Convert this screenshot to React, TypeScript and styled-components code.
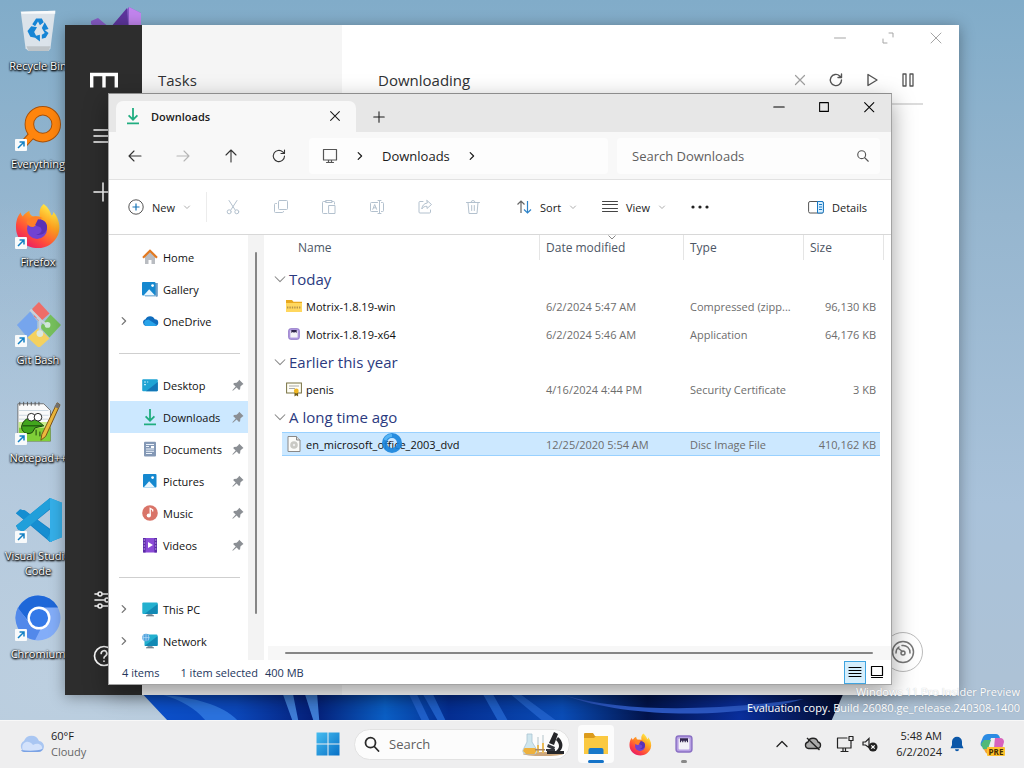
import React from 'react';
import styled, { createGlobalStyle, css } from 'styled-components';

const GlobalStyle = createGlobalStyle`
  *, *::before, *::after { box-sizing: border-box; }
  body { margin: 0; font-family: "Open Sans", "Noto Sans", sans-serif; font-size: 11px; color: #1b1b1b; }
  button, input { font: inherit; color: inherit; border: 0; background: none; padding: 0; margin: 0; }
  svg { display: block; flex: none; }
`;

/* ---------- desktop ---------- */

const Screen = styled.div`
  display: flex;
  flex-direction: column;
  height: 100vh;
  overflow: hidden;
`;

const Desktop = styled.main`
  flex: 1;
  min-height: 0;
  position: relative;
  overflow: hidden;
  background:
    radial-gradient(ellipse at 5% 95%, #bccfe0 0, rgba(188, 207, 224, 0) 50%),
    linear-gradient(180deg, #81acc9 0%, #96b6cf 30%, #a9c2da 70%, #aec2d5 100%);
`;

const Bloom = styled.svg`
  position: absolute;
  left: 13%;
  bottom: 0;
  width: 70%;
  height: 32px;
`;

const IconGrid = styled.div`
  display: flex;
  gap: 2px;
  padding-top: 7px;
`;

const IconColumn = styled.div`
  display: flex;
  flex-direction: column;
  width: 76px;
`;

const Shortcut = styled.a`
  position: relative;
  display: flex;
  flex-direction: column;
  align-items: center;
  gap: 5px;
  height: 98px;
  color: #fff;
  text-decoration: none;
  text-align: center;
  line-height: 15px;
  text-shadow: 0 1px 2px #000, 1px 1px 2px #000, 0 0 2px #000;
`;

const ShortcutArrow = styled.svg`
  position: absolute;
  left: 15px;
  top: 34px;
`;

const Watermark = styled.div`
  position: absolute;
  right: 4px;
  bottom: 4px;
  text-align: right;
  line-height: 16px;
  color: #fff;
  text-shadow: 0 0 1px rgba(60, 70, 90, 0.4);
`;

/* ---------- Motrix window ---------- */

const MotrixWindow = styled.section`
  position: absolute;
  inset: 25px 65px 25px 65px;
  display: flex;
  background: #fff;
  box-shadow: 0 2px 14px rgba(0, 0, 0, 0.35);
`;

const MotrixRail = styled.nav`
  display: flex;
  flex-direction: column;
  align-items: center;
  gap: 32px;
  width: 77px;
  padding: 43px 0 26px;
  background: #2d2d2d;
  color: #fff;
`;

const RailButton = styled.button<{ $pushed?: boolean }>`
  display: flex;
  height: 24px;
  margin-top: ${(p) => (p.$pushed ? 'auto' : '0')};
`;

const MotrixTasks = styled.aside`
  width: 200px;
  padding: 43px 16px;
  background: #f5f5f5;
`;

const MotrixTitle = styled.h2`
  margin: 0;
  font-size: 15px;
  line-height: 24px;
  font-weight: 400;
  color: #303133;
`;

const MotrixMain = styled.div`
  flex: 1;
  display: flex;
  flex-direction: column;
  padding: 0 36px;
`;

const MotrixCaption = styled.div`
  display: flex;
  justify-content: flex-end;
  gap: 32px;
  height: 26px;
  padding-top: 5px;
  margin-right: -21px;
  color: #a5a5a5;
`;

const MotrixHeader = styled.div`
  display: flex;
  align-items: center;
  height: 54px;
  padding-top: 6px;
  border-bottom: 2px solid #dcdcdc;
`;

const MotrixActions = styled.div`
  display: flex;
  gap: 20px;
  margin-left: auto;
  margin-right: 7px;
  color: #555;
`;

const PlainButton = styled.button<{ $muted?: boolean }>`
  display: flex;
  color: ${(p) => (p.$muted ? '#a0a0a0' : 'inherit')};
`;

const SpeedBadge = styled.button`
  display: flex;
  align-items: center;
  justify-content: center;
  width: 40px;
  height: 40px;
  margin: auto 0 23px auto;
  border: 1px solid #bbb;
  border-radius: 50%;
  color: #777;
`;

/* ---------- Explorer window ---------- */

const ExplorerWindow = styled.section`
  position: absolute;
  inset: 93px 132px 35px 108px;
  display: flex;
  flex-direction: column;
  border: 1px solid #a3a3a3;
  border-top-color: #8d8d8d;
  background: #fff;
  box-shadow: 0 8px 22px rgba(0, 0, 0, 0.38);
`;

const TabStrip = styled.header`
  display: flex;
  align-items: flex-end;
  height: 38px;
  flex: none;
  padding-left: 7px;
  background: #e7e7e7;
`;

const Tab = styled.div`
  display: flex;
  align-items: center;
  width: 240px;
  height: 31px;
  padding: 0 14px 1px 9px;
  gap: 10px;
  border-radius: 7px 7px 0 0;
  background: #f8f8f8;
  font-weight: 600;
`;

const TabClose = styled.button`
  display: flex;
  margin-left: auto;
`;

const NewTab = styled.button`
  display: flex;
  padding: 8px 16px;
`;

const CaptionButtons = styled.div`
  display: flex;
  align-self: flex-start;
  margin-left: auto;
`;

const CaptionButton = styled.button`
  display: flex;
  align-items: center;
  justify-content: center;
  width: 45px;
  height: 26px;
`;

const NavBar = styled.div`
  display: flex;
  align-items: center;
  height: 48px;
  flex: none;
  padding: 0 11px 0 2px;
  background: #f8f8f8;
  border-bottom: 1px solid #e2e2e2;
`;

const IconButton = styled.button<{ $dim?: boolean; $narrow?: boolean }>`
  display: flex;
  align-items: center;
  justify-content: center;
  width: ${(p) => (p.$narrow ? '40px' : '48px')};
  height: 32px;
  flex: none;
  color: ${(p) => (p.$dim ? '#b5b5b5' : '#333')};
`;

const AddressBar = styled.div`
  display: flex;
  align-items: center;
  flex: 1;
  gap: 14px;
  height: 36px;
  margin: 0 9px 0 6px;
  padding: 0 13px;
  border-radius: 4px;
  background: #fdfdfd;
  font-size: 13px;
`;

const SearchBox = styled.label`
  display: flex;
  align-items: center;
  width: 263px;
  height: 36px;
  padding: 0 10px 0 15px;
  border-radius: 4px;
  background: #fdfdfd;
`;

const SearchInput = styled.input`
  flex: 1;
  min-width: 0;
  font-size: 13px;
  outline: none;
  &::placeholder { color: #5f5f5f; opacity: 1; }
`;

const Toolbar = styled.div`
  display: flex;
  align-items: center;
  height: 55px;
  flex: none;
  padding: 0 16px 0 11px;
  border-bottom: 1px solid #d8d8d8;
`;

const CommandButton = styled.button<{ $end?: boolean }>`
  display: flex;
  align-items: center;
  gap: 8px;
  width: ${(p) => (p.$end ? 'auto' : '86px')};
  height: 32px;
  padding: 0 8px;
  margin-left: ${(p) => (p.$end ? 'auto' : '0')};
`;

const ToolDivider = styled.span`
  width: 1px;
  height: 30px;
  margin: 0 2px 0 0;
  background: #ececec;
`;

const IconTools = styled.div`
  display: flex;
  margin-right: 11px;
`;

const Body = styled.div`
  display: flex;
  flex: 1;
  min-height: 0;
`;

const Sidebar = styled.nav`
  width: 139px;
  flex: none;
  padding-top: 6px;
  padding-left: 1px;
  overflow: hidden;
`;

const SideItem = styled.a<{ $active?: boolean }>`
  display: grid;
  grid-template-columns: 21px 16px 1fr 16px;
  column-gap: 5px;
  align-items: center;
  height: 32px;
  padding-left: 6px;
  color: #111;
  text-decoration: none;
  white-space: nowrap;
  background: ${(p) => (p.$active ? '#cce8ff' : 'transparent')};
`;

const SideRule = styled.hr`
  height: 1px;
  margin: 16px 8px 15px 9px;
  border: 0;
  background: #cfcfcf;
`;

const ScrollTrack = styled.div`
  display: flex;
  justify-content: center;
  width: 16px;
  flex: none;
  padding: 17px 0 46px;
  background: #f3f3f3;
`;

const ScrollThumb = styled.span<{ $flat?: boolean }>`
  ${(p) => (p.$flat
    ? css`flex: 1; height: 2px;`
    : css`width: 2px;`)}
  border-radius: 1px;
  background: #868686;
`;

const ListPane = styled.div`
  display: flex;
  flex-direction: column;
  flex: 1;
  min-width: 0;
  padding-left: 4px;
`;

const FlatTrack = styled.div`
  display: flex;
  align-items: center;
  height: 14px;
  margin-top: auto;
  padding: 0 18px 1px 17px;
  background: #f7f7f7;
`;

const FileTable = styled.table`
  width: calc(100% - 7px);
  table-layout: fixed;
  border-collapse: separate;
  border-spacing: 0;
  color: #6d6d6d;
`;

const HeadCell = styled.th<{ $line?: boolean }>`
  position: relative;
  height: 25px;
  padding: 0 0 0 ${(p) => (p.$line ? '6px' : '16px')};
  border-left: ${(p) => (p.$line ? '1px solid #e5e5e5' : '0')};
  text-align: left;
  font-size: 12px;
  font-weight: 400;
  color: #4c5665;
`;

const HeadEnd = styled.td`
  border-right: 1px solid #e5e5e5;
`;

const SortMark = styled.svg`
  position: absolute;
  left: 67px;
  top: 0;
`;

const Spacer = styled.td`
  height: 5px;
  padding: 0;
`;

const GroupCell = styled.th`
  height: 27px;
  padding: 0 0 0 6px;
  text-align: left;
  font-size: 15px;
  line-height: 20px;
  font-weight: 400;
  color: #2b3a80;
`;

const Inline = styled.span<{ $gap: number }>`
  display: flex;
  align-items: center;
  gap: ${(p) => p.$gap}px;
`;

const Cell = styled.td<{ $align?: 'right' }>`
  height: 28px;
  padding: 0 4px 0 7px;
  border: 0 solid transparent;
  border-width: 2px 0;
  background-clip: padding-box;
  text-align: ${(p) => p.$align ?? 'left'};
  white-space: nowrap;
  overflow: hidden;
  text-overflow: ellipsis;
`;

const NameCell = styled(Cell)`
  padding: 0 4px;
  color: #111;
`;

const FileRow = styled.tr<{ $selected?: boolean }>`
  ${(p) => p.$selected && css`
    ${Cell} {
      background-color: #cce8ff;
      box-shadow: inset 0 1px #99d1ff, inset 0 -1px #99d1ff;
    }
  `}
`;

const StatusBar = styled.footer`
  display: flex;
  align-items: center;
  height: 24px;
  flex: none;
  padding: 0 6px 0 13px;
  color: #24365c;
`;

const StatusText = styled.span<{ $gap: number }>`
  margin-right: ${(p) => p.$gap}px;
`;

const ViewButton = styled.button<{ $on?: boolean }>`
  display: flex;
  align-items: center;
  justify-content: center;
  width: 22px;
  height: 23px;
  border: 1px solid ${(p) => (p.$on ? '#3fa4e0' : 'transparent')};
  background: ${(p) => (p.$on ? '#d5eefc' : 'transparent')};
`;

const ViewSwitch = styled.div`
  display: flex;
  margin-left: auto;
  margin-right: -3px;
`;

const BusyCursor = styled.svg`
  position: absolute;
  left: 272px;
  top: 338px;
`;

/* ---------- taskbar ---------- */

const Taskbar = styled.footer`
  display: grid;
  grid-template-columns: 1fr auto 1fr;
  align-items: center;
  height: 48px;
  flex: none;
  padding-bottom: 1px;
  background: #eeeeef;
  border-top: 1px solid #f8f8f8;
`;

const Weather = styled.button`
  display: flex;
  align-items: center;
  gap: 6px;
  padding-left: 18px;
  text-align: left;
  line-height: 16px;
`;

const Muted = styled.span`
  display: block;
  color: #666;
`;

const Dock = styled.div`
  display: flex;
  align-items: center;
  gap: 8px;
  padding-right: 12px;
`;

const DockButton = styled.button<{ $active?: boolean }>`
  position: relative;
  display: flex;
  align-items: center;
  justify-content: center;
  width: 36px;
  height: 38px;
  border-radius: 4px;
  background: ${(p) => (p.$active ? '#fcfcfc' : 'transparent')};
`;

const RunMark = styled.span<{ $active?: boolean }>`
  position: absolute;
  bottom: 0;
  width: ${(p) => (p.$active ? '16px' : '6px')};
  height: 3px;
  border-radius: 2px;
  background: ${(p) => (p.$active ? '#1473c8' : '#888')};
`;

const DockSearch = styled.label`
  display: flex;
  align-items: center;
  gap: 9px;
  width: 216px;
  height: 31px;
  padding: 0 4px 0 9px;
  border: 1px solid #e2e2e2;
  border-radius: 16px;
  background: #fcfcfc;
`;

const Tray = styled.div`
  display: flex;
  align-items: center;
  justify-content: flex-end;
  gap: 8px;
  padding-right: 18px;
  color: #222;
`;

const TrayIcons = styled.div`
  display: flex;
  align-items: center;
  gap: 14px;
`;

const Clock = styled.div`
  width: 56px;
  text-align: right;
  line-height: 16px;
  white-space: nowrap;
`;

const CopilotButton = styled(PlainButton)`
  margin-left: 8px;
`;

/* ---------- line icons ---------- */

type GlyphProps = { d: string; size?: number; w?: number; box?: number; color?: string };

const Glyph = ({ d, size = 16, w = 1, box = 16, color = 'currentColor' }: GlyphProps) => (
  <svg width={size} height={size} viewBox={`0 0 ${box} ${box}`} fill="none" stroke={color} strokeWidth={w} strokeLinecap="round" strokeLinejoin="round" aria-hidden="true">
    <path d={d} />
  </svg>
);

const CLOSE = 'M3 3l10 10M13 3L3 13';
const REFRESH = 'M13.5 8a5.6 5.6 0 1 1-1.8-4.1L13.5 5.5M13.5 2v3.5H10';
const CHEVRON_RIGHT = 'M6.2 4.6l3.4 3.4-3.4 3.400';
const CHEVRON_DOWN = 'M3 6l5 5 5-5';

const DownArrow = () => (
  <svg width="16" height="18" viewBox="0 0 16 18" fill="none" stroke="#20ad80" strokeWidth="1.8">
    <path d="M8 1v11.5M3.6 8.4L8 12.7l4.4-4.3M2 16.4h12" />
  </svg>
);

const Pin = () => (
  <svg width="12" height="12" viewBox="0 0 12 12">
    <path d="M7.2.8l4.300 4.300-1.200.6-1.900 1.900-.3 2.700-1.100.6L4.600 8.500 1.200 11.600l-.8.2.2-.8L3.700 7.600 1.300 5.200l.6-1.100 2.700-.3 1.900-1.900z" fill="#8b8f94" />
  </svg>
);

const Monitor = ({ network }: { network?: boolean }) => (
  <svg width="16" height="16" viewBox="0 0 16 16">
    <path d="M6 12h4l1 3H5z" fill="#8898a5" /><path d="M4 14.3h8v1H4z" fill="#6b7883" />
    <rect x={network ? 2.5 : 0.3} y="1.5" width={network ? 13 : 15.4} height="11.5" rx="1" fill="#23b0cf" />
    <path d="M2.5 13L15.7 3v9a1 1 0 0 1-1 1z" fill="#1289b4" />
    {network && <><circle cx="4" cy="4.6" r="3.8" fill="#4d9fdc" /><path d="M.5 4.6h7M4 1v7.2M2 1.6c-1 2-1 4 0 6M6 1.6c1 2 1 4 0 6" stroke="#c7e9fb" strokeWidth=".6" fill="none" /></>}
  </svg>
);

const PictureIcon = ({ stacked }: { stacked?: boolean }) => (
  <svg width="16" height="16" viewBox="0 0 16 16">
    {stacked && <path d="M3 2h12.5v13.5H3z" fill="#0a5b9e" />}
    {stacked && <path d="M14 1v14.2H2" stroke="#fff" fill="none" strokeWidth=".8" />}
    <rect x={stacked ? 0 : 1} y="1" width="13.5" height="13.5" rx="1" fill="#1588cf" />
    <path d="M1.6 14.5l5.6-6.2 5.8 6.2z" fill="#eaf7ff" /><circle cx="10.6" cy="4.6" r="1.4" fill="#fff" />
  </svg>
);

const MotrixApp = ({ size = 14 }: { size?: number }) => (
  <svg width={size} height={size} viewBox="0 0 20 20">
    <rect x="1.2" y="1.2" width="17.6" height="17.6" rx="3" fill="#b7a0e4" stroke="#8a70c4" strokeWidth="1.6" />
    <rect x="4" y="4" width="12" height="12" rx="1" fill="#f4f2f8" /><path d="M5.500 3.500h9v4.500h-1.300V6.500h-1.200V8h-1.300V6.500H9.300V8H8V6.500H6.800V8H5.500z" fill="#32264e" />
  </svg>
);

const FirefoxIcon = ({ size }: { size: number }) => (
  <svg width={size} height={size} viewBox="0 0 48 48">
    <defs>
      <linearGradient id="fox" x1="0.85" y1="0.05" x2="0.2" y2="1"><stop offset="0" stopColor="#fff44f" /><stop offset=".35" stopColor="#ffa21f" /><stop offset=".7" stopColor="#ff4a3c" /><stop offset="1" stopColor="#e5146c" /></linearGradient>
    </defs>
    <path d="M30 1c5 4 7 8 8 12 2-1 2-3 2-4 6 7 8 16 5 24-4 9-12 14-21 14C11 47 1 38 1 25c0-6 2-12 5-15 0 2 1 3 2 4 2-3 5-5 7-6 0 3 1 5 4 6h7c-1-5 0-10 4-13z" fill="url(#fox)" />
    <circle cx="23" cy="27" r="10.5" fill="#7142d2" /><path d="M14 17c4-4 10-4 15-1-3 0-4 2-2 4l-8 5c-4 0-6-2-7-5z" fill="#ff7f28" /><path d="M24 17c7 0 11 5 9 11-2 5-7 6-11 5 5-1 7-4 5-7-1-2-4-1-6-3z" fill="#5b31b5" />
  </svg>
);

/* ---------- desktop shortcut art ---------- */

const recycleArt = (
  <svg width="46" height="46" viewBox="0 0 48 48">
    <path d="M6 5l36-1-5 39-2 3H14l-3-3z" fill="#e4e9ed" opacity=".9" /><path d="M6 5l36-1v3H7z" fill="#f9fbfc" /><path d="M12 41h25l-2 5H14z" fill="#bec4c8" />
    <g fill="#1685d5"><path d="M18 18l4-6h6l2 4-4 3-2-4-3 5z" /><path d="M31 16l4 7-4 1 4 3-3 5-4 1v-4l3-2-3-5z" /><path d="M26 29v7l-5-4-5-1-3-6 4-5 6 1-3 5 2 4z" /></g>
  </svg>
);
const everythingArt = (
  <svg width="46" height="46" viewBox="0 0 48 48">
    <path d="M18 31L7 43" stroke="#a75008" strokeWidth="8" strokeLinecap="round" /><circle cx="29" cy="20" r="14" fill="none" stroke="#a75008" strokeWidth="10" />
    <path d="M18 31L7 43" stroke="#ff850d" strokeWidth="6" strokeLinecap="round" /><circle cx="29" cy="20" r="14" fill="none" stroke="#ff850d" strokeWidth="8" />
  </svg>
);
const gitArt = (
  <svg width="48" height="46" viewBox="0 0 48 48">
    <path d="M18 8l7-7 11 12-10 9-6-6z" fill="#ee6d68" /><path d="M16 11L2 25l11 13 10-9v-8z" fill="#76a5ed" /><path d="M37 14l11 11-12 13-10-11z" fill="#76c05c" /><path d="M25 28l11 11-11 10-12-11z" fill="#f4d160" />
    <path d="M16 9l10 10v15M23 17l10 8" stroke="#c7d2dc" strokeWidth="2.5" fill="none" /><circle cx="26" cy="34" r="3.5" fill="#dce7dd" /><circle cx="34" cy="25" r="3" fill="#d0e8d7" />
  </svg>
);
const notepadArt = (
  <svg width="46" height="46" viewBox="0 0 48 48">
    <path d="M3 5h27l7 7v32H3z" fill="#fafafa" stroke="#555" strokeWidth=".8" /><path d="M4 24h33v20H4z" fill="#80cf38" /><path d="M4 24h33v6H4z" fill="#c9ed8c" />
    <path d="M5 3v4M9 3v4M13 3v4M17 3v4M21 3v4M25 3v4" stroke="#555" /><path d="M4 12h31M4 17h31M4 21h31" stroke="#cbd6df" />
    <path d="M7 28c2-9 13-11 17-5l6 5-9 2-3 5c-6 3-12-1-11-7z" fill="#42a51d" stroke="#173f0c" /><circle cx="17" cy="19" r="4" fill="#fff" stroke="#222" /><circle cx="24" cy="19" r="4" fill="#fff" stroke="#222" /><path d="M8 28h20M22 38v-6M26 39v-5M30 39v-5" stroke="#173f0c" />
    <path d="M44 4l3 2-15 33-5 4 1-6z" fill="#edb83d" stroke="#775017" /><path d="M44 4l3 2-2 4-4-2z" fill="#777" />
  </svg>
);
const codeArt = (
  <svg width="48" height="46" viewBox="0 0 48 48" preserveAspectRatio="none">
    <path d="M36 1v46L2 17l4-4 5 1 25 19V13L9 36l-5-2-2-4z" fill="#1480c4" /><path d="M2 17l4-4 5 1 27 22v11z" fill="#168ed1" /><path d="M36 1l12 5v36l-12 5-3-3 3-6V12L9 36l-5-2-2-4z" fill="#219fda" /><path d="M36 1l12 5v36l-12 5z" fill="#35afe8" />
  </svg>
);
const chromiumArt = (
  <svg width="46" height="46" viewBox="0 0 48 48">
    <circle cx="24" cy="24" r="23.5" fill="#83adf8" /><path d="M3 14A23.5 23.5 0 0 1 45 13H24L14 27z" fill="#1e67d8" /><path d="M3 13l13 18 11 4-6 12A23.5 23.5 0 0 1 3 13z" fill="#5289ea" /><circle cx="25" cy="24" r="12" fill="#fff" /><circle cx="25" cy="24" r="9.5" fill="#3479e8" />
  </svg>
);
const studioArt = (
  <svg width="50" height="48" viewBox="0 0 50 48">
    <path d="M0 14l7-3 12 10L38 0l12 6v36l-12 6L0 17z" fill="#865bc5" /><path d="M20 20L36 1l2 30z" fill="#5d359c" /><path d="M38 0l12 6v36l-12 6z" fill="#c184ed" />
  </svg>
);

const shortcuts = [
  { name: 'Recycle Bin', art: recycleArt, linked: false },
  { name: 'Everything', art: everythingArt, linked: true },
  { name: 'Firefox', art: <FirefoxIcon size={46} />, linked: true },
  { name: 'Git Bash', art: gitArt, linked: true },
  { name: 'Notepad++', art: notepadArt, linked: true },
  { name: 'Visual Studio Code', art: codeArt, linked: true },
  { name: 'Chromium', art: chromiumArt, linked: true },
];

/* ---------- explorer data ---------- */

const homeIcon = <svg width="16" height="16" viewBox="0 0 16 16"><path d="M3 7l5-5 5 5v8H9.5v-4h-3v4H3z" fill="#b9bcc1" /><path d="M1 8.7l7-7 7 7" fill="none" stroke="#e27920" strokeWidth="2.2" /></svg>;
const cloudIcon = <svg width="17" height="16" viewBox="0 0 16 16"><path d="M3.5 13A3.5 3.5 0 0 1 3 6.2a5 5 0 0 1 9.2 0A3.4 3.4 0 0 1 12.5 13z" fill="#0f6cbd" /><path d="M3.5 13A3.5 3.5 0 0 1 3 7.2l3-.7L14.5 12l-2 1z" fill="#28a3e9" /></svg>;
const desktopIcon = <svg width="16" height="16" viewBox="0 0 16 16"><rect x=".2" y="2.3" width="15.6" height="12" rx="1" fill="#20a4d4" /><path d="M4 14.3L15.8 5v8.3a1 1 0 0 1-1 1z" fill="#1476b6" /><path d="M2.2 5h1.6M2.2 7.6h1.6M5.2 5h1" stroke="#e3fbff" strokeWidth="1.2" /></svg>;
const documentsIcon = <svg width="16" height="16" viewBox="0 0 16 16"><rect x="2" y=".8" width="12" height="14.6" rx="1" fill="#8498b5" /><path d="M4 3.5h8M4 5.5h3M4 8h8M4 10.3h8M4 12.5h6" stroke="#edf3fb" strokeWidth="1.1" /><path d="M9 5h3v2H9z" fill="#fff" /></svg>;
const musicIcon = <svg width="16" height="16" viewBox="0 0 16 16"><circle cx="8" cy="8" r="7.8" fill="#d97468" /><circle cx="6.8" cy="10.5" r="2.1" fill="#fff" /><path d="M8.2 10.5V3.3l2.5 1.5v1.6" stroke="#fff" strokeWidth="1.3" fill="none" /></svg>;
const videosIcon = <svg width="16" height="16" viewBox="0 0 16 16"><rect x="1" y="1" width="14" height="14.5" rx="1" fill="#8a4bd6" /><path d="M1 1h2.6v14.5H1zM12.4 1H15v14.5h-2.6z" fill="#5a2ba5" /><path d="M1.7 3h1.2M1.7 6h1.2M1.7 9h1.2M1.7 12h1.2M13.1 3h1.2M13.1 6h1.2M13.1 9h1.2M13.1 12h1.2" stroke="#d9c0f6" /><path d="M6 5l5 3-5 3z" fill="#fff" /></svg>;

type Place = { name: string; icon: React.ReactNode; expand?: boolean; pin?: boolean; active?: boolean };
const placeGroups: Place[][] = [
  [
    { name: 'Home', icon: homeIcon },
    { name: 'Gallery', icon: <PictureIcon stacked /> },
    { name: 'OneDrive', icon: cloudIcon, expand: true },
  ],
  [
    { name: 'Desktop', icon: desktopIcon, pin: true },
    { name: 'Downloads', icon: <DownArrow />, pin: true, active: true },
    { name: 'Documents', icon: documentsIcon, pin: true },
    { name: 'Pictures', icon: <PictureIcon />, pin: true },
    { name: 'Music', icon: musicIcon, pin: true },
    { name: 'Videos', icon: videosIcon, pin: true },
  ],
  [
    { name: 'This PC', icon: <Monitor />, expand: true },
    { name: 'Network', icon: <Monitor network />, expand: true },
  ],
];

const zipIcon = <svg width="16" height="16" viewBox="0 0 16 16"><path d="M0 2h6l1.5 1.7H16V14H0z" fill="#e9a91f" /><path d="M0 5h16v9H0z" fill="#ffd75e" /><path d="M1 9.500h14" stroke="#b8954a" strokeWidth="2" strokeDasharray="1.4 1" /></svg>;
const appIcon = <svg width="16" height="16" viewBox="-2 -2 16 16"><MotrixApp size={12} /></svg>;
const certIcon = <svg width="16" height="16" viewBox="0 0 16 16"><rect x=".6" y="2" width="14.8" height="10" fill="#fffef5" stroke="#787243" /><path d="M3 5h10M3 7.5h6" stroke="#aaa" /><path d="M8.5 11v4.5l1.8-1.3 1.8 1.3V11z" fill="#705c18" /><circle cx="10.3" cy="10" r="2.4" fill="#efb520" /></svg>;
const discIcon = <svg width="16" height="16" viewBox="0 0 16 16"><path d="M2 .5h8.5L14 4v11.5H2z" fill="#fbfbf8" stroke="#888" /><path d="M10.5.5V4H14" fill="#ddd" stroke="#888" /><circle cx="8" cy="9" r="3.8" fill="#c9c9c4" /><circle cx="8" cy="9" r="1.2" fill="#eee" /></svg>;

type FileInfo = { name: string; icon: React.ReactNode; date: string; type: string; size: string; selected?: boolean };
const fileGroups: { title: string; files: FileInfo[] }[] = [
  {
    title: 'Today',
    files: [
      { name: 'Motrix-1.8.19-win', icon: zipIcon, date: '6/2/2024 5:47 AM', type: 'Compressed (zipp...', size: '96,130 KB' },
      { name: 'Motrix-1.8.19-x64', icon: appIcon, date: '6/2/2024 5:46 AM', type: 'Application', size: '64,176 KB' },
    ],
  },
  { title: 'Earlier this year', files: [{ name: 'penis', icon: certIcon, date: '4/16/2024 4:44 PM', type: 'Security Certificate', size: '3 KB' }] },
  { title: 'A long time ago', files: [{ name: 'en_microsoft_office_2003_dvd', icon: discIcon, date: '12/25/2020 5:54 AM', type: 'Disc Image File', size: '410,162 KB', selected: true }] },
];

const fileTools = [
  { label: 'Cut', d: 'M4 1.5l6.2 9.5M12 1.5L5.8 11M6.2 12.8a2 2 0 1 1-4 0 2 2 0 0 1 4 0M13.8 12.8a2 2 0 1 1-4 0 2 2 0 0 1 4 0' },
  { label: 'Copy', d: 'M6.5 1.5h7a1 1 0 0 1 1 1v7a1 1 0 0 1-1 1h-7a1 1 0 0 1-1-1v-7a1 1 0 0 1 1-1M3.5 4.5h-1a1 1 0 0 0-1 1v7a1 1 0 0 0 1 1h7a1 1 0 0 0 1-1' },
  { label: 'Paste', d: 'M6 14.5H2.5a1 1 0 0 1-1-1v-10a1 1 0 0 1 1-1H5M11 2.5h1.500a1 1 0 0 1 1 1V5M5 1.500h6v2H5zM8 6.500h6v8H8z' },
  { label: 'Rename', d: 'M8.500 3.500h-6a1 1 0 0 0-1 1v7a1 1 0 0 0 1 1h6M12.500 3.500h1a1 1 0 0 1 1 1v7a1 1 0 0 1-1 1h-1M10.500 1.500v13M9 1.500h3M9 14.500h3M3.800 10.300L5.700 5.500l1.900 4.800M4.500 8.800h2.400' },
  { label: 'Share', d: 'M6 2.500H3a1 1 0 0 0-1 1v9.500a1 1 0 0 0 1 1h9.500a1 1 0 0 0 1-1v-2M10 1.500l4.500 4-4.500 4V7.300c-2.500 0-4 .7-5.200 2.700.3-3.200 2-5.500 5.200-6z' },
  { label: 'Delete', d: 'M1.500 3.500h13M3 3.500l1 11h8l1-11M6 3.500a2 2 0 0 1 4 0M6.700 6.500v5M9.300 6.500v5' },
];

/* ---------- windows ---------- */

const Motrix = () => (
  <MotrixWindow aria-label="Motrix">
    <MotrixRail>
      <RailButton aria-label="Motrix">
        <svg width="28" height="24" viewBox="0 0 28 24"><path d="M1.700 19.500V6.500h24.600v13M14 6.500v13" fill="none" stroke="#fff" strokeWidth="3.400" /></svg>
      </RailButton>
      <RailButton aria-label="Task list"><Glyph size={24} box={24} w={1.6} d="M2 6h20M2 12h20M2 18h20" /></RailButton>
      <RailButton aria-label="Add task"><Glyph size={24} box={24} w={1.6} d="M11 3v18M2 12h18" /></RailButton>
      <RailButton aria-label="Preferences" $pushed>
        <Glyph size={22} box={22} w={1.6} d="M2 5h3M9 5h11M2 11h10M16 11h4M2 17h3M9 17h11M9 5a2 2 0 1 1-4 0 2 2 0 0 1 4 0M16 11a2 2 0 1 1-4 0 2 2 0 0 1 4 0M9 17a2 2 0 1 1-4 0 2 2 0 0 1 4 0" />
      </RailButton>
      <RailButton aria-label="Help">
        <Glyph size={22} box={22} w={1.7} d="M20.500 11a9.500 9.500 0 1 1-19 0 9.500 9.500 0 0 1 19 0M8.200 8.500a2.800 2.800 0 1 1 4.200 2.400c-1 .6-1.400 1-1.400 2M11 16v.2" />
      </RailButton>
    </MotrixRail>
    <MotrixTasks><MotrixTitle>Tasks</MotrixTitle></MotrixTasks>
    <MotrixMain>
      <MotrixCaption>
        <PlainButton aria-label="Minimize Motrix"><Glyph d="M2.500 8h11" /></PlainButton>
        <PlainButton aria-label="Maximize Motrix"><Glyph d="M9 3h4v4M7 13H3V9" /></PlainButton>
        <PlainButton aria-label="Close Motrix"><Glyph d={CLOSE} /></PlainButton>
      </MotrixCaption>
      <MotrixHeader>
        <MotrixTitle>Downloading</MotrixTitle>
        <MotrixActions>
          <PlainButton aria-label="Delete task" $muted><Glyph w={1.2} d="M3.500 3.500l9 9M12.500 3.500l-9 9" /></PlainButton>
          <PlainButton aria-label="Refresh list"><Glyph w={1.4} d={REFRESH} /></PlainButton>
          <PlainButton aria-label="Resume all"><Glyph w={1.4} d="M4 2.500l9 5.500-9 5.500z" /></PlainButton>
          <PlainButton aria-label="Pause all"><Glyph w={1.3} d="M3 2h3v12H3zM10 2h3v12h-3z" /></PlainButton>
        </MotrixActions>
      </MotrixHeader>
      <SpeedBadge aria-label="Speed">
        <Glyph size={24} box={24} w={1.5} d="M22.500 12a10.500 10.500 0 1 1-21 0 10.500 10.500 0 0 1 21 0M5 13a7 7 0 0 1 3-6M11 5.500a7 7 0 0 1 8 7.500M7.500 8.500l4 3M14 13a2 2 0 1 1-4 0 2 2 0 0 1 4 0" />
      </SpeedBadge>
    </MotrixMain>
  </MotrixWindow>
);

const Explorer = () => (
  <ExplorerWindow aria-label="Downloads">
    <TabStrip>
      <Tab>
        <DownArrow />
        <span>Downloads</span>
        <TabClose aria-label="Close tab"><Glyph size={14} d={CLOSE} w={1.2} /></TabClose>
      </Tab>
      <NewTab aria-label="New tab"><Glyph size={14} d="M8 2v12M2 8h12" w={1.2} /></NewTab>
      <CaptionButtons>
        <CaptionButton aria-label="Minimize"><Glyph size={14} w={1.2} d="M2 8h12" color="#000" /></CaptionButton>
        <CaptionButton aria-label="Maximize"><Glyph size={14} w={1.2} d="M3 3h10v10H3z" color="#000" /></CaptionButton>
        <CaptionButton aria-label="Close"><Glyph size={14} w={1.2} d="M3 3l10.500 10.500M13.500 3L3 13.500" color="#000" /></CaptionButton>
      </CaptionButtons>
    </TabStrip>
    <NavBar>
      <IconButton aria-label="Back"><Glyph d="M14 8H2M7 3L2 8l5 5" w={1.1} /></IconButton>
      <IconButton aria-label="Forward" $dim><Glyph d="M2 8h12M9 3l5 5-5 5" w={1.1} /></IconButton>
      <IconButton aria-label="Up"><Glyph d="M8 14V2.500M3 7l5-5 5 5" w={1.1} /></IconButton>
      <IconButton aria-label="Refresh"><Glyph d={REFRESH} w={1.1} /></IconButton>
      <AddressBar>
        <Glyph d="M1.500 1.500h13v10.500h-13zM4.500 14.500h7M6.500 12v2.500M9.500 12v2.500" w={1.2} color="#555" />
        <Glyph d={CHEVRON_RIGHT} w={1.2} />
        <span>Downloads</span>
        <Glyph d={CHEVRON_RIGHT} w={1.2} />
      </AddressBar>
      <SearchBox>
        <SearchInput aria-label="Search Downloads" placeholder="Search Downloads" />
        <Glyph size={14} d="M11 6.500a4.500 4.500 0 1 1-9 0 4.500 4.500 0 0 1 9 0M10 10l4 4" w={1.3} color="#555" />
      </SearchBox>
    </NavBar>
    <Toolbar>
      <CommandButton>
        <svg width="16" height="16" viewBox="0 0 16 16" fill="none"><circle cx="8" cy="8" r="7.200" stroke="#555" /><path d="M8 4.500v7M4.500 8h7" stroke="#1673b5" strokeWidth="1.200" /></svg>
        New <Glyph size={8} d={CHEVRON_DOWN} w={1.600} color="#999" />
      </CommandButton>
      <ToolDivider />
      <IconTools>
        {fileTools.map((t) => (
          <IconButton key={t.label} aria-label={t.label}><Glyph d={t.d} color="#b3c1ce" /></IconButton>
        ))}
      </IconTools>
      <CommandButton>
        <svg width="16" height="16" viewBox="0 0 16 16" fill="none" strokeWidth="1.200"><path d="M5 14V2M1.500 5.500L5 2l3.500 3.500" stroke="#666" /><path d="M11.500 2v12M8 10.500l3.500 3.500 3.500-3.500" stroke="#2e83c8" /></svg>
        Sort <Glyph size={8} d={CHEVRON_DOWN} w={1.600} color="#999" />
      </CommandButton>
      <CommandButton>
        <Glyph d="M.5 2.500h15M.5 5.500h15M.5 9.500h15M.5 12.500h15" color="#444" />
        View <Glyph size={8} d={CHEVRON_DOWN} w={1.600} color="#999" />
      </CommandButton>
      <IconButton aria-label="See more" $narrow><svg width="18" height="4" viewBox="0 0 18 4"><circle cx="2" cy="2" r="1.600" fill="#222" /><circle cx="9" cy="2" r="1.600" fill="#222" /><circle cx="16" cy="2" r="1.600" fill="#222" /></svg></IconButton>
      <CommandButton $end>
        <svg width="16" height="16" viewBox="0 0 16 16" fill="none"><rect x=".6" y="2.500" width="14.800" height="11.500" rx="1.500" stroke="#555" /><path d="M9.500 2.500h4.500a1.400 1.400 0 0 1 1.400 1.500v8.500a1.400 1.400 0 0 1-1.400 1.500H9.500z" fill="#d8efff" stroke="#1678c4" /><path d="M11 5.500h3M11 8h3M11 10.500h3" stroke="#1678c4" /></svg>
        Details
      </CommandButton>
    </Toolbar>
    <Body>
      <Sidebar>
        {placeGroups.map((group, i) => (
          <React.Fragment key={i}>
            {i > 0 && <SideRule />}
            {group.map((p) => (
              <SideItem key={p.name} href="#" $active={p.active}>
                <span>{p.expand && <Glyph size={16} d={CHEVRON_RIGHT} w={1.300} color="#777" />}</span>
                {p.icon}
                <span>{p.name}</span>
                {p.pin ? <Pin /> : null}
              </SideItem>
            ))}
          </React.Fragment>
        ))}
      </Sidebar>
      <ScrollTrack><ScrollThumb /></ScrollTrack>
      <ListPane>
        <FileTable>
          <colgroup>
            <col width="14" /><col /><col width="144" /><col width="120" /><col width="77" /><col width="4" />
          </colgroup>
          <thead>
            <tr>
              <td />
              <HeadCell>Name</HeadCell>
              <HeadCell $line>Date modified<SortMark width="10" height="5" viewBox="0 0 10 5"><path d="M1.500 .5L5 4l3.500-3.500" fill="none" stroke="#888" /></SortMark></HeadCell>
              <HeadCell $line>Type</HeadCell>
              <HeadCell $line>Size</HeadCell>
              <HeadEnd />
            </tr>
            <tr><Spacer colSpan={6} /></tr>
          </thead>
          {fileGroups.map((g) => (
            <tbody key={g.title}>
              <tr>
                <GroupCell colSpan={6} scope="rowgroup">
                  <Inline $gap={3}><Glyph size={12} d="M1.500 5L8 11.500 14.500 5" w={1.400} color="#888" />{g.title}</Inline>
                </GroupCell>
              </tr>
              {g.files.map((f) => (
                <FileRow key={f.name} $selected={f.selected}>
                  <td />
                  <NameCell><Inline $gap={4}>{f.icon}{f.name}</Inline></NameCell>
                  <Cell>{f.date}</Cell>
                  <Cell>{f.type}</Cell>
                  <Cell $align="right">{f.size}</Cell>
                  <td />
                </FileRow>
              ))}
            </tbody>
          ))}
        </FileTable>
        <FlatTrack><ScrollThumb $flat /></FlatTrack>
      </ListPane>
    </Body>
    <StatusBar>
      <StatusText $gap={21}>4 items</StatusText>
      <StatusText $gap={7}>1 item selected</StatusText>
      <span>400 MB</span>
      <ViewSwitch>
        <ViewButton $on aria-label="Details view"><Glyph size={14} box={14} d="M1 2.500h12M1 5.500h12M1 8.500h12M1 11.500h12" color="#000" /></ViewButton>
        <ViewButton aria-label="Large icons view"><Glyph size={14} box={14} d="M1.500 1.500h11v9h-11zM1.500 12.500h11" color="#000" w={1.200} /></ViewButton>
      </ViewSwitch>
    </StatusBar>
    <BusyCursor width="22" height="22" viewBox="0 0 22 22">
      <circle cx="11" cy="11" r="7.500" fill="none" stroke="#1683dc" strokeWidth="5" opacity=".9" />
      <path d="M4 8a7.500 7.500 0 0 1 7-4.500" fill="none" stroke="#56b4f4" strokeWidth="3" />
    </BusyCursor>
  </ExplorerWindow>
);

const StartLogo = () => (
  <svg width="24" height="24" viewBox="0 0 24 24">
    <defs><linearGradient id="win" x1="0" y1="0" x2="1" y2="1"><stop offset="0" stopColor="#46bdf0" /><stop offset="1" stopColor="#0870c6" /></linearGradient></defs>
    <path d="M.5.5h11v11H.5zM12.500.5h11v11h-11zM.5 12.500h11v11H.5zM12.500 12.500h11v11h-11z" fill="url(#win)" />
  </svg>
);

const LabArt = () => (
  <svg width="44" height="26" viewBox="0 0 44 26">
    <ellipse cx="22" cy="23" rx="20" ry="2" fill="#cda77c" />
    <path d="M6 3h5v8l5 8a3 3 0 0 1-3 4H5a3 3 0 0 1-3-4l4-8z" fill="#cfe6ee" stroke="#a9c4d2" strokeWidth=".8" /><path d="M3.500 17h11l1 3-2 3H5l-3-3z" fill="#eeb13d" />
    <path d="M16 6h2v15h-2zM21 4h2v17h-2z" fill="#d8e0e3" /><path d="M16 14h2v8h-2zM21 12h2v10h-2z" fill="#e9bb58" /><path d="M14 18h10v1.500H14z" fill="#a98560" />
    <path d="M33 1l4 2-4 11-5-2zM37 6c5 4 6 10 2 14h4v3H26v-3h9c4-3 4-7 0-11z" fill="#252629" /><path d="M27 13l7 3-1 3-7-3zM25 18h9v2h-9z" fill="#34363c" />
  </svg>
);

const App = () => (
  <Screen>
    <GlobalStyle />
    <Desktop>
      <Bloom viewBox="0 0 716 32" preserveAspectRatio="none">
        <defs><linearGradient id="bloom"><stop offset="0" stopColor="#0c52ce" /><stop offset=".14" stopColor="#0c48bb" /><stop offset=".25" stopColor="#051f78" /><stop offset=".35" stopColor="#0b5fc5" /><stop offset=".44" stopColor="#052e92" /><stop offset=".6" stopColor="#0b4db7" /><stop offset=".72" stopColor="#03144b" /><stop offset=".85" stopColor="#0a2f9d" /><stop offset="1" stopColor="#040b29" /></linearGradient></defs>
        <path d="M4 0h708l-14 32H34z" fill="url(#bloom)" />
        <path d="M30 7c30 2 60 10 74 25H72C62 20 48 12 30 7z" fill="#2b72dd" /><path d="M150 7l9 25h6l-5-25zM172 7l8 25h6l-2-25z" fill="#3f7dd6" /><path d="M276 7l12 25h8L284 7zM290 7l14 25h8L300 7zM350 7l14 25h10L360 7zM378 7l30 25h14L388 7z" fill="#1f5fc9" /><path d="M430 7c60 18 150 16 240 4-60 18-170 22-240-4z" fill="#2c58c4" />
      </Bloom>
      <IconGrid>
        <IconColumn>
          {shortcuts.map((s) => (
            <Shortcut key={s.name} href="#">
              {s.art}
              {s.linked && (
                <ShortcutArrow width="12" height="12" viewBox="0 0 12 12"><rect width="12" height="12" rx="1" fill="#f8fafb" /><path d="M3 9l5.500-5.500M4.500 3h4.500v4.500" fill="none" stroke="#1380c4" strokeWidth="1.500" /></ShortcutArrow>
              )}
              <span>{s.name}</span>
            </Shortcut>
          ))}
        </IconColumn>
        <IconColumn><Shortcut as="div">{studioArt}</Shortcut></IconColumn>
      </IconGrid>
      <Motrix />
      <Explorer />
      <Watermark>Windows 11 Pro Insider Preview<br />Evaluation copy. Build 26080.ge_release.240308-1400</Watermark>
    </Desktop>
    <Taskbar>
      <Weather>
        <svg width="27" height="20" viewBox="0 0 27 20"><path d="M7 18a6 6 0 0 1-1-11 8 8 0 0 1 15 0 5.500 5.500 0 0 1-1 11z" fill="#a9c6f2" /><path d="M7 18a5.500 5.500 0 0 1 1-10c4-1 6 2 7 3 5-3 10 0 9 4l-4 3z" fill="#d3e2fb" /><path d="M3 16c1 2 3 2 4 2h13c2 0 4-1 5-3-6 2-15 2-22 1z" fill="#7aa2e4" /></svg>
        <span>60°F<Muted>Cloudy</Muted></span>
      </Weather>
      <Dock>
        <DockButton aria-label="Start"><StartLogo /></DockButton>
        <DockSearch>
          <Glyph w={1.800} d="M11.500 6.700a5 5 0 1 1-10 0 5 5 0 0 1 10 0M10.300 10.500L14.500 15" color="#2a2a2a" />
          <SearchInput aria-label="Search" placeholder="Search" />
          <LabArt />
        </DockSearch>
        <DockButton $active aria-label="File Explorer">
          <svg width="26" height="24" viewBox="0 0 26 24"><path d="M1 2a1 1 0 0 1 1-1h8l2 3h12a1 1 0 0 1 1 1v4H1z" fill="#dc9b1c" /><path d="M1 6h10l2-2h12v18H1z" fill="#fbc941" /><path d="M5.500 22v-4a2 2 0 0 1 2-2h11a2 2 0 0 1 2 2v4z" fill="#1878c9" /></svg>
          <RunMark $active />
        </DockButton>
        <DockButton aria-label="Firefox"><FirefoxIcon size={23} /></DockButton>
        <DockButton aria-label="Motrix"><MotrixApp size={18} /><RunMark /></DockButton>
      </Dock>
      <Tray>
        <TrayIcons>
          <PlainButton aria-label="Show hidden icons"><Glyph d="M3 10.500L8 5.500l5 5" w={1.300} /></PlainButton>
          <PlainButton aria-label="OneDrive status">
            <svg width="18" height="16" viewBox="0 0 18 16"><path d="M4.500 12.500A3.300 3.300 0 0 1 4 6a5.200 5.200 0 0 1 10 0 3.300 3.300 0 0 1-.5 6.500z" fill="#aaa" stroke="#222" strokeWidth="1.300" /><path d="M3 2l12.500 12" stroke="#222" strokeWidth="1.400" /></svg>
          </PlainButton>
          <PlainButton aria-label="Network status"><Glyph size={18} box={18} w={1.200} d="M11 3H1.500v10H15V9.500M5 16.500h7M7 13v3.500M9.500 13v3.500M13 1.500h4v4h-4zM15 5.500V9" /></PlainButton>
        </TrayIcons>
        <PlainButton aria-label="Volume muted">
          <svg width="16" height="16" viewBox="0 0 16 16"><path d="M1 6h2.500L7 2.500v9L3.500 9H1z" fill="none" stroke="#222" strokeWidth="1.200" /><circle cx="11" cy="11" r="4.500" fill="#222" /><path d="M9.300 9.300l3.400 3.400M12.700 9.300l-3.400 3.400" stroke="#fff" strokeWidth="1.200" /></svg>
        </PlainButton>
        <Clock>5:48 AM<br />6/2/2024</Clock>
        <PlainButton aria-label="Notifications">
          <svg width="14" height="16" viewBox="0 0 14 16"><path d="M7 .8a5 5 0 0 1 5 5V9l1.500 3.300H.5L2 9V5.800a5 5 0 0 1 5-5zM5 13.300h4a2 2 0 0 1-4 0z" fill="#0b57a8" /></svg>
        </PlainButton>
        <CopilotButton aria-label="Copilot">
          <svg width="26" height="24" viewBox="0 0 26 24">
            <path d="M8 2h8c2 0 3 1 4 4H11l-3 9H4c-3 0-4-2-3-5l2-5c1-2 3-3 5-3z" fill="#2b8be3" /><path d="M1 12l2 5c1 1 3 1 5 0l3-9H4z" fill="#50b978" /><path d="M15 6h5c3 0 4 2 4 4l-2 7c-1 3-3 4-5 4h-6c4-2 3-9 4-15z" fill="#d763bd" /><path d="M4 17h8l1 5H9c-3 0-4-2-5-5z" fill="#f4a332" />
            <rect x="7" y="15" width="18" height="9" rx="1" fill="#ffc22e" /><text x="16" y="22.500" textAnchor="middle" fontSize="8" fontWeight="700" fill="#442c00">PRE</text>
          </svg>
        </CopilotButton>
      </Tray>
    </Taskbar>
  </Screen>
);

export default App;
